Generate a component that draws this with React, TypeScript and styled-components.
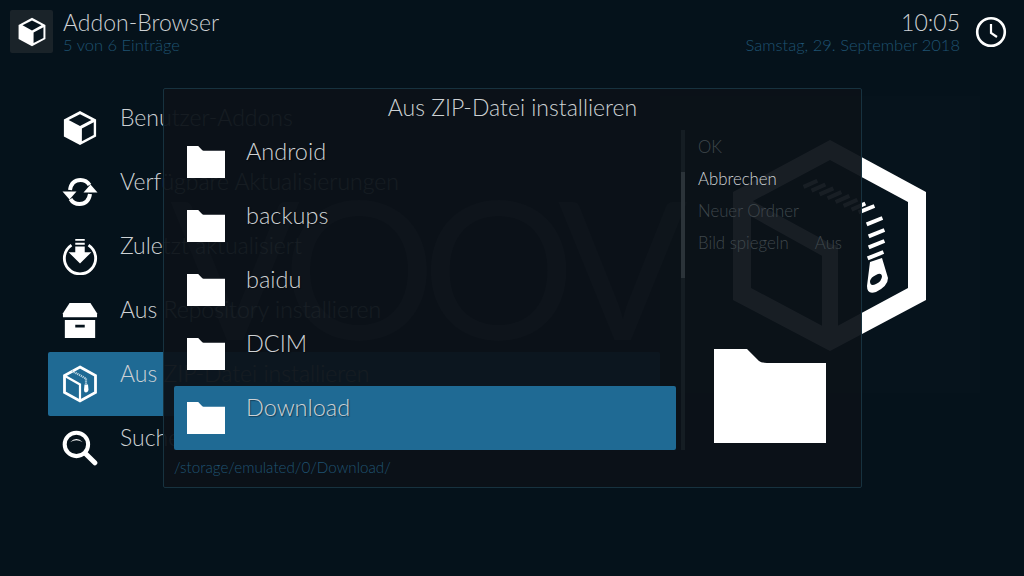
import React from "react";
import styled, { createGlobalStyle } from "styled-components";

const Global = createGlobalStyle`
  html, body {
    margin: 0;
    padding: 0;
    background: #05121b;
  }
  * {
    box-sizing: border-box;
  }
`;

const Page = styled.div`
  position: relative;
  width: 1024px;
  height: 576px;
  overflow: hidden;
  background: #05121b;
  font-family: "Lato", "Open Sans", sans-serif;
  font-weight: 300;
  color: #cdd1d4;
`;

const Watermark = styled.div`
  position: absolute;
  left: 6px;
  top: 32px;
  font-size: 192px;
  font-weight: 400;
  line-height: 290px;
  letter-spacing: -14px;
  white-space: nowrap;
  color: rgba(255, 255, 255, 0.016);
`;

const Header = styled.header`
  display: flex;
  justify-content: space-between;
  height: 64px;
  padding: 10px 17px 0 10px;
`;

const HeaderSide = styled.div`
  display: flex;
  align-items: flex-start;
`;

const IconBox = styled.div`
  display: flex;
  align-items: center;
  justify-content: center;
  width: 43px;
  height: 43px;
  margin-right: 10px;
  border-radius: 2px;
  background: #1a2329;
`;

const HeaderText = styled.div<{ $right?: boolean }>`
  display: flex;
  flex-direction: column;
  text-align: ${(p) => (p.$right ? "right" : "left")};
  margin-right: ${(p) => (p.$right ? "15px" : "0")};
`;

const HeaderTitle = styled.div`
  height: 25px;
  font-size: 23px;
  line-height: 24px;
`;

const HeaderSub = styled.div`
  font-size: 16.5px;
  line-height: 20px;
  color: #1f5372;
`;

const ClockWrap = styled.div`
  padding-top: 6px;
`;

const Main = styled.main`
  display: flex;
  padding: 32px 0 0 48px;
`;

const Menu = styled.nav`
  display: flex;
  flex-direction: column;
  width: 612px;
`;

const MenuRow = styled.div<{ $active?: boolean }>`
  display: flex;
  align-items: flex-start;
  height: 64px;
  padding-left: 14px;
  border-radius: 2px;
  background: ${(p) => (p.$active ? "#1f6a94" : "transparent")};
`;

const MenuIcon = styled.div`
  display: flex;
  align-items: center;
  justify-content: center;
  width: 36px;
  height: 64px;
  margin-right: 22px;
`;

const MenuLabel = styled.div`
  padding-top: 7px;
  font-size: 23px;
  line-height: 28px;
  white-space: nowrap;
`;

const ArtPanel = styled.div`
  width: 320px;
  height: 297px;
  padding: 44px 0 0 73px;
  background: #06131c;
`;

const Dialog = styled.section`
  position: absolute;
  left: 163px;
  top: 88px;
  display: flex;
  flex-direction: column;
  width: 699px;
  height: 400px;
  overflow: hidden;
  border: 1px solid #17323f;
  border-radius: 2px;
  background: rgba(12, 18, 24, 0.95);
`;

const DialogTitle = styled.h2`
  position: relative;
  height: 41px;
  margin: 0;
  font-size: 23px;
  font-weight: 300;
  line-height: 37px;
  text-align: center;
`;

const DialogBody = styled.div`
  position: relative;
  display: flex;
  height: 320px;
  padding-left: 10px;
`;

const FileList = styled.ul`
  width: 502px;
  margin: 0;
  padding: 0;
  list-style: none;
`;

const FileRow = styled.li<{ $selected?: boolean }>`
  display: flex;
  align-items: flex-start;
  height: 64px;
  padding: 16px 0 0 13px;
  border-radius: 2px;
  background: ${(p) => (p.$selected ? "#1f6a94" : "transparent")};
`;

const FileName = styled.span`
  margin: -9px 0 0 21px;
  font-size: 23.5px;
  line-height: 28px;
  text-shadow: 1px 1px 1px rgba(0, 0, 0, 0.4);
`;

const Track = styled.div`
  width: 4px;
  margin-left: 5px;
  background: #151d23;
`;

const Thumb = styled.div`
  margin-top: 42px;
  height: 106px;
  background: #2b3339;
`;

const SideColumn = styled.div`
  display: flex;
  flex-direction: column;
  width: 157px;
  padding: 1px 0 7px 13px;
`;

const SideRow = styled.div<{ $focus?: boolean }>`
  display: flex;
  justify-content: space-between;
  height: 32px;
  font-size: 16.8px;
  line-height: 32px;
  white-space: nowrap;
  color: ${(p) => (p.$focus ? "#cdd1d4" : "#3f474c")};
`;

const BigFolder = styled.div`
  margin: auto 0 0 16px;
  line-height: 0;
`;

const PathBar = styled.div`
  position: relative;
  padding: 7px 0 0 10px;
  font-size: 15.2px;
  line-height: 20px;
  color: #1f5372;
`;

function FolderIcon({ width, height }: { width: number; height: number }) {
  return (
    <svg width={width} height={height} viewBox="0 0 112 94">
      <path d="M0 0H33L45 12Q48 14 53 14H112V94H0Z" fill="#fff" />
    </svg>
  );
}

function CubeIcon({ size }: { size: number }) {
  return (
    <svg width={size} height={size} viewBox="0 0 36 38">
      <path d="M18 1L35 10V28L18 37L1 28V10Z" fill="#fff" />
      <path d="M18 4.5L30 10.6L18 17L6 10.6Z" fill="#08151e" />
      <path d="M20 19.5L32.5 13V26.5L20 33Z" fill="#08151e" />
    </svg>
  );
}

function SyncIcon() {
  return (
    <svg width="36" height="36" viewBox="0 0 36 36" fill="none">
      <path d="M8 16C9 9.5 13 6 18.5 6C22.5 6 25.5 7.5 27.5 11" stroke="#fff" strokeWidth="4" />
      <path d="M28 20C27 26.5 23 30 17.5 30C13.5 30 10.5 28.5 8.5 25" stroke="#fff" strokeWidth="4" />
      <path d="M0.5 17.5H14.5L7.5 25.5Z" fill="#fff" />
      <path d="M21.5 18.5H35.5L28.5 10.5Z" fill="#fff" />
    </svg>
  );
}

function DownloadIcon() {
  return (
    <svg width="38" height="38" viewBox="0 0 38 38" fill="none">
      <path d="M10 7.5A16.5 16.5 0 1 0 28 7.5" stroke="#fff" strokeWidth="3" />
      <path d="M14 1H24V3H14ZM14 5H24V7H14ZM14 9H24V15H31L19 27L7 15H14Z" fill="#fff" />
    </svg>
  );
}

function BoxIcon() {
  return (
    <svg width="38" height="38" viewBox="0 0 38 38">
      <path d="M8 1H30L37 12V16H1V12Z" fill="#fff" />
      <path d="M3 19H35V38H3ZM14 24V27H24V24Z" fill="#fff" fillRule="evenodd" />
    </svg>
  );
}

function ZipIcon() {
  return (
    <svg width="36" height="38" viewBox="0 0 36 38" fill="none">
      <path d="M18 2L33.5 10.5V27.5L18 36L2.5 27.5V10.5Z" stroke="#fff" strokeWidth="2.8" />
      <path d="M3 11L18 19.5V35" stroke="#fff" strokeWidth="2.2" />
      <path d="M10 6L24 13.5V19" stroke="#b9d3e0" strokeWidth="2.2" strokeDasharray="1.2 0.8" />
      <path d="M22.5 19.5H26L26.5 25Q26 27 24 27.5Q22 27.5 22 25Z" fill="#fff" />
    </svg>
  );
}

function SearchIcon() {
  return (
    <svg width="40" height="40" viewBox="0 0 40 40" fill="none">
      <circle cx="16" cy="16" r="13" stroke="#fff" strokeWidth="4.5" />
      <path d="M9 13.5Q16 6.5 23 13.5Q16 9.5 9 13.5Z" fill="#fff" />
      <path d="M26 26L36.5 36.5" stroke="#fff" strokeWidth="5.5" strokeLinecap="round" />
    </svg>
  );
}

function ClockIcon() {
  return (
    <svg width="32" height="32" viewBox="0 0 32 32" fill="none">
      <circle cx="16" cy="16" r="13.8" stroke="#fff" strokeWidth="2.6" />
      <path d="M16 8V17L22 21" stroke="#fff" strokeWidth="2.2" />
    </svg>
  );
}

function ZipHexArt() {
  const topStripes = [0, 1, 2, 3, 4, 5, 6];
  const sideStripes = [
    [134, 69],
    [142, 81],
    [144, 93],
    [144, 104],
    [143, 115],
  ];
  return (
    <svg width="194" height="211" viewBox="0 0 194 211" style={{ display: "block" }}>
      <path
        fillRule="evenodd"
        fill="#fff"
        d="M97 0L193 52V160L97 211L0 160V52ZM97 20L18 62V148L97 190L175 148V62Z"
      />
      <path d="M89 105H105V195H89Z" fill="#fff" />
      <path d="M14 58L100 105L93 118L12 73Z" fill="#fff" />
      {topStripes.map((i) => (
        <rect
          key={i}
          x={70 + i * 8}
          y={42 + i * 3.8}
          width="15"
          height="4"
          transform={`rotate(-24 ${77 + i * 8} ${44 + i * 3.8})`}
          fill="#fff"
        />
      ))}
      {sideStripes.map(([cx, cy]) => (
        <rect
          key={cy}
          x={cx - 9}
          y={cy - 2}
          width="17"
          height="4"
          transform={`rotate(-22 ${cx} ${cy})`}
          fill="#fff"
        />
      ))}
      <path
        fillRule="evenodd"
        fill="#fff"
        d="M137 122L149 118L155 138Q155 146 143 152Q134 155 134 146ZM137 141Q137 147 143 144Q149 141 149 136Q148 132 143 135Q138 137 137 141Z"
      />
    </svg>
  );
}

const menuItems = [
  { label: "Benutzer-Addons", icon: <CubeIcon size={36} /> },
  { label: "Verfügbare Aktualisierungen", icon: <SyncIcon /> },
  { label: "Zuletzt aktualisiert", icon: <DownloadIcon /> },
  { label: "Aus Repository installieren", icon: <BoxIcon /> },
  { label: "Aus ZIP-Datei installieren", icon: <ZipIcon />, active: true },
  { label: "Suchen", icon: <SearchIcon /> },
];

const folders = ["Android", "backups", "baidu", "DCIM", "Download"];

export default function App() {
  return (
    <Page>
      <Global />
      <Header>
        <HeaderSide>
          <IconBox>
            <CubeIcon size={30} />
          </IconBox>
          <HeaderText>
            <HeaderTitle>Addon-Browser</HeaderTitle>
            <HeaderSub>5 von 6 Einträge</HeaderSub>
          </HeaderText>
        </HeaderSide>
        <HeaderSide>
          <HeaderText $right>
            <HeaderTitle>10:05</HeaderTitle>
            <HeaderSub>Samstag, 29. September 2018</HeaderSub>
          </HeaderText>
          <ClockWrap>
            <ClockIcon />
          </ClockWrap>
        </HeaderSide>
      </Header>
      <Main>
        <Menu>
          {menuItems.map((item) => (
            <MenuRow key={item.label} $active={item.active}>
              <MenuIcon>{item.icon}</MenuIcon>
              <MenuLabel>{item.label}</MenuLabel>
            </MenuRow>
          ))}
        </Menu>
        <ArtPanel>
          <ZipHexArt />
        </ArtPanel>
      </Main>
      <Dialog>
        <Watermark>VOOV</Watermark>
        <DialogTitle>Aus ZIP-Datei installieren</DialogTitle>
        <DialogBody>
          <FileList>
            {folders.map((name) => (
              <FileRow key={name} $selected={name === "Download"}>
                <FolderIcon width={38} height={32} />
                <FileName>{name}</FileName>
              </FileRow>
            ))}
          </FileList>
          <Track>
            <Thumb />
          </Track>
          <SideColumn>
            <SideRow>OK</SideRow>
            <SideRow $focus>Abbrechen</SideRow>
            <SideRow>Neuer Ordner</SideRow>
            <SideRow>
              <span>Bild spiegeln</span>
              <span>Aus</span>
            </SideRow>
            <BigFolder>
              <FolderIcon width={112} height={94} />
            </BigFolder>
          </SideColumn>
        </DialogBody>
        <PathBar>/storage/emulated/0/Download/</PathBar>
      </Dialog>
    </Page>
  );
}
